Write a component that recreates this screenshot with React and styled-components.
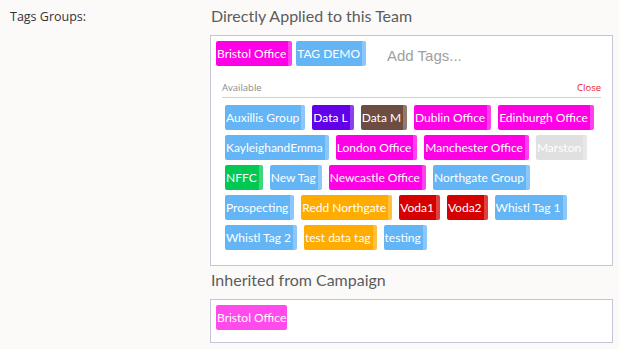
import React from "react";
import styled, { createGlobalStyle } from "styled-components";

const GlobalStyle = createGlobalStyle`
  body {
    margin: 0;
    background: #fbfaf9;
    font-family: Lato, "Liberation Sans", sans-serif;
  }
`;

const colors = {
  blue: "#64b5f6",
  magenta: "#ff00e6",
  pink: "#ff4aec",
  purple: "#6200ea",
  brown: "#6d4c41",
  green: "#00c853",
  grey: "#e0e0e0",
  orange: "#ffab00",
  red: "#d50000",
};

const selected = [
  { name: "Bristol Office", color: "magenta" },
  { name: "TAG DEMO", color: "blue" },
];

const available = [
  { name: "Auxillis Group", color: "blue" },
  { name: "Data L", color: "purple" },
  { name: "Data M", color: "brown" },
  { name: "Dublin Office", color: "magenta" },
  { name: "Edinburgh Office", color: "magenta" },
  { name: "KayleighandEmma", color: "blue" },
  { name: "London Office", color: "magenta" },
  { name: "Manchester Office", color: "magenta" },
  { name: "Marston", color: "grey" },
  { name: "NFFC", color: "green" },
  { name: "New Tag", color: "blue" },
  { name: "Newcastle Office", color: "magenta" },
  { name: "Northgate Group", color: "blue" },
  { name: "Prospecting", color: "blue" },
  { name: "Redd Northgate", color: "orange" },
  { name: "Voda1", color: "red" },
  { name: "Voda2", color: "red" },
  { name: "Whistl Tag 1", color: "blue" },
  { name: "Whistl Tag 2", color: "blue" },
  { name: "test data tag", color: "orange" },
  { name: "testing", color: "blue" },
];

const App = () => {
  return (
    <>
      <GlobalStyle />
      <Page>
        <Label>Tags Groups:</Label>
        <Column>
          <Heading>Directly Applied to this Team</Heading>
          <Box>
            <SelectedRow>
              {selected.map((t) => (
                <Tag key={t.name} $color={colors[t.color]}>
                  {t.name}
                </Tag>
              ))}
              <AddInput>Add Tags...</AddInput>
            </SelectedRow>
            <Dropdown>
              <DropHeader>
                <span>Available</span>
                <CloseLink>Close</CloseLink>
              </DropHeader>
              <TagList>
                {available.map((t) => (
                  <Tag key={t.name} $color={colors[t.color]}>
                    {t.name}
                  </Tag>
                ))}
              </TagList>
            </Dropdown>
          </Box>
          <Heading>Inherited from Campaign</Heading>
          <InheritedBox>
            <Tag $color={colors.pink} $plain>
              Bristol Office
            </Tag>
          </InheritedBox>
        </Column>
      </Page>
    </>
  );
};

export default App;

const Page = styled.div`
  display: flex;
  padding: 6px 0 0 10px;
`;

const Label = styled.div`
  width: 200px;
  flex-shrink: 0;
  font-family: "Open Sans", sans-serif;
  font-size: 12.5px;
  color: #333;
  padding-top: 2px;
`;

const Column = styled.div`
  width: 403px;
  display: flex;
  flex-direction: column;
`;

const Heading = styled.div`
  font-size: 16px;
  line-height: 20px;
  color: #5c5c5c;
  padding-left: 1px;
  margin-bottom: 9px;
`;

const Box = styled.div`
  background: #fff;
  border: 1px solid #c5c5d5;
  padding: 5px 5px 15px;
  margin-bottom: 4px;
`;

const SelectedRow = styled.div`
  display: flex;
  align-items: center;
  gap: 4px;
`;

const AddInput = styled.div`
  font-family: "Liberation Sans", Arial, sans-serif;
  font-size: 15px;
  color: #a0a0a0;
  margin-left: 17px;
  padding-top: 3px;
`;

const Dropdown = styled.div`
  margin: 15px 6px 0 6px;
`;

const DropHeader = styled.div`
  display: flex;
  justify-content: space-between;
  font-family: "Open Sans", sans-serif;
  font-size: 9.5px;
  line-height: 13px;
  color: #8a8a8a;
  padding-bottom: 3px;
  border-bottom: 1px solid #cfcfd8;
`;

const CloseLink = styled.span`
  color: #e8202a;
  cursor: pointer;
`;

const TagList = styled.div`
  display: flex;
  flex-wrap: wrap;
  gap: 5px 7px;
  margin-top: 7px;
  padding-left: 3px;
  width: 378px;
`;

const Tag = styled.span`
  position: relative;
  display: inline-block;
  height: 25px;
  line-height: 25px;
  padding: 0 ${({ $plain }) => ($plain ? "1px" : "6px")} 0 1px;
  border-radius: 2px;
  background: ${({ $color }) => $color};
  color: #fff;
  font-size: 12px;
  white-space: nowrap;
  overflow: hidden;
  &::after {
    content: "";
    display: ${({ $plain }) => ($plain ? "none" : "block")};
    position: absolute;
    top: 0;
    right: 0;
    width: 4px;
    height: 100%;
    background: rgba(255, 255, 255, 0.25);
  }
`;

const InheritedBox = styled.div`
  background: #fff;
  border: 1px solid #c5c5d5;
  padding: 5px 5px 9px;
`;
